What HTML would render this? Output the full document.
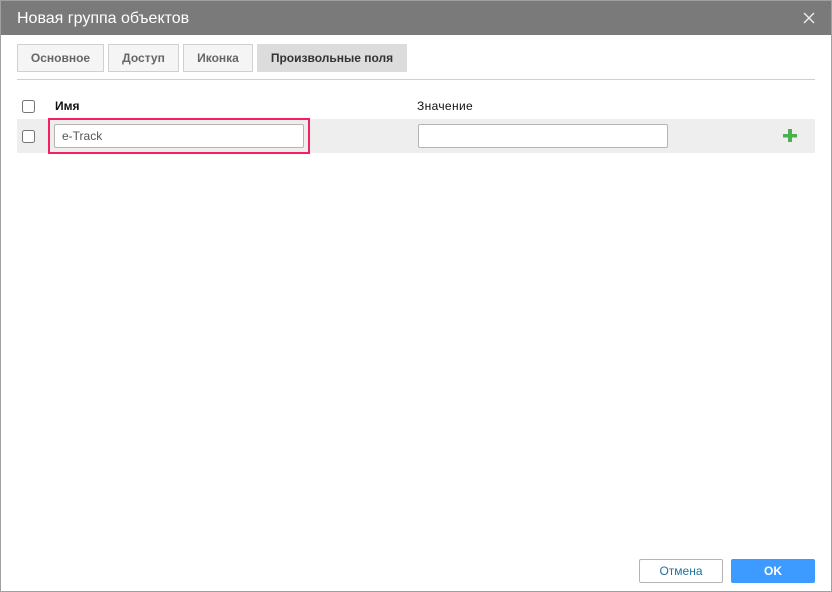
<!DOCTYPE html>
<html lang="ru">
<head>
<meta charset="utf-8">
<title>Новая группа объектов</title>
<style>
html,body{margin:0;padding:0;background:#fff}
body{width:832px;height:592px;position:relative;overflow:hidden;font-family:"Liberation Sans",Arial,sans-serif}
.a{position:absolute;box-sizing:border-box}
.tab{top:44px;height:28px;background:#f5f5f5;border:1px solid #d0d0d0;color:#666;font-size:12px;font-weight:bold;line-height:26px;text-align:center}
.cb{width:13px;height:13px;border:1px solid #767676;border-radius:2.5px;background:#fff}
.inp{height:24px;width:250px;top:124px;background:#fff;border:1px solid #b4b4b4;border-radius:2px;font-size:12px;line-height:22px;color:#555;padding-left:7px}
.lbl{top:99px;font-size:12px;line-height:14px;color:#111}
</style>
</head>
<body>
<div class="a" style="left:0;top:0;width:832px;height:592px;border:1px solid #a0a0a0"></div>
<div class="a" style="left:1px;top:1px;width:830px;height:34px;background:#7a7a7a"></div>
<div class="a" style="left:17px;top:8px;font-size:16px;line-height:20px;color:#fff;margin-top:1px">Новая группа объектов</div>
<svg class="a" style="left:803px;top:12px" width="12" height="12" viewBox="0 0 12 12"><path d="M1 1L11 11M11 1L1 11" stroke="#f0f0f0" stroke-width="1.3" fill="none"/></svg>

<div class="a tab" style="left:17px;width:87px">Основное</div>
<div class="a tab" style="left:108px;width:71px">Доступ</div>
<div class="a tab" style="left:183px;width:70px">Иконка</div>
<div class="a tab" style="left:257px;width:150px;background:#dcdcdc;border-color:#dcdcdc;color:#333">Произвольные поля</div>
<div class="a" style="left:17px;top:79px;width:798px;height:1px;background:#d0d0d0"></div>

<div class="a cb" style="left:22px;top:100px"></div>
<div class="a lbl" style="left:55px;font-weight:bold">Имя</div>
<div class="a lbl" style="left:417px;letter-spacing:.35px">Значение</div>

<div class="a" style="left:17px;top:119px;width:798px;height:34px;background:#eeeeee"></div>
<div class="a cb" style="left:22px;top:130px"></div>
<div class="a" style="left:48px;top:118px;width:262px;height:36px;border:2px solid #f5205f"></div>
<div class="a inp" style="left:54px">e-Track</div>
<div class="a inp" style="left:418px"></div>
<svg class="a" style="left:783px;top:129px" width="14" height="13" viewBox="0 0 14 13"><path d="M5 0H9V5H14V8.5H9V13H5V8.5H0V5H5Z" fill="#4caf50"/></svg>

<div class="a" style="left:639px;top:559px;width:84px;height:24px;background:#fff;border:1px solid #b4b4b4;border-radius:2px;color:#1f6f9f;font-size:12px;line-height:22px;text-align:center">Отмена</div>
<div class="a" style="left:731px;top:559px;width:84px;height:24px;background:#3d9bff;border-radius:2px;color:#fff;font-size:12px;font-weight:bold;line-height:24px;text-align:center">OK</div>
</body>
</html>
